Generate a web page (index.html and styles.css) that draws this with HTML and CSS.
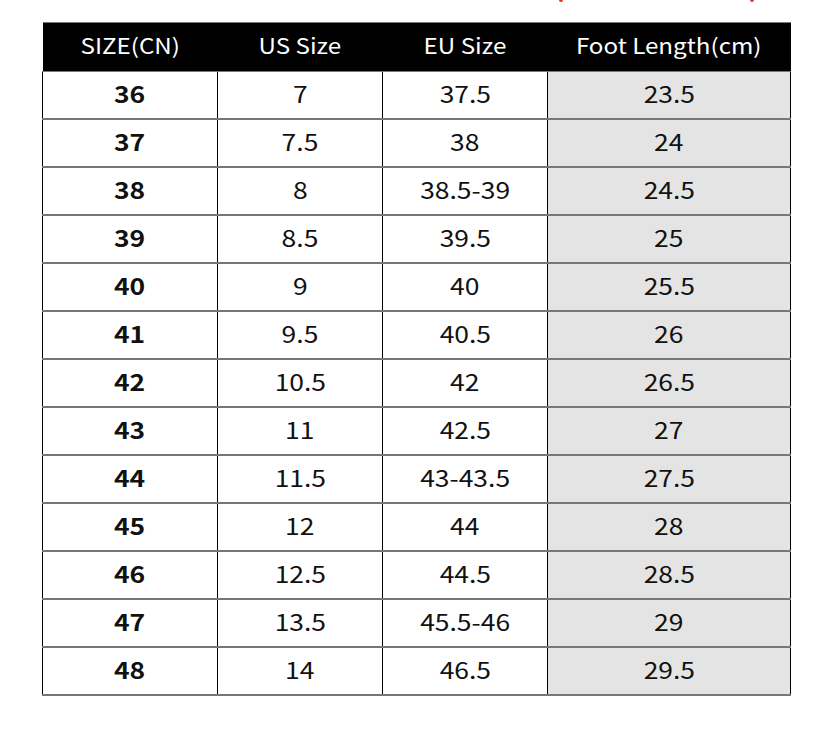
FILE: index.html
```html
<!DOCTYPE html>
<html>
<head>
<meta charset="utf-8">
<link rel="stylesheet" href="styles.css">
</head>
<body>
<div class="top">
  <span class="dot dot-a"></span>
  <span class="dot dot-b"></span>
</div>
<table class="chart">
  <colgroup>
    <col class="c1"><col class="c2"><col class="c3"><col class="c4">
  </colgroup>
  <thead>
    <tr><th><span>SIZE(CN)</span></th><th><span>US Size</span></th><th><span>EU Size</span></th><th><span>Foot Length(cm)</span></th></tr>
  </thead>
  <tbody>
    <tr><td class="cn"><span>36</span></td><td><span>7</span></td><td><span>37.5</span></td><td class="foot"><span>23.5</span></td></tr>
    <tr><td class="cn"><span>37</span></td><td><span>7.5</span></td><td><span>38</span></td><td class="foot"><span>24</span></td></tr>
    <tr><td class="cn"><span>38</span></td><td><span>8</span></td><td><span>38.5-39</span></td><td class="foot"><span>24.5</span></td></tr>
    <tr><td class="cn"><span>39</span></td><td><span>8.5</span></td><td><span>39.5</span></td><td class="foot"><span>25</span></td></tr>
    <tr><td class="cn"><span>40</span></td><td><span>9</span></td><td><span>40</span></td><td class="foot"><span>25.5</span></td></tr>
    <tr><td class="cn"><span>41</span></td><td><span>9.5</span></td><td><span>40.5</span></td><td class="foot"><span>26</span></td></tr>
    <tr><td class="cn"><span>42</span></td><td><span>10.5</span></td><td><span>42</span></td><td class="foot"><span>26.5</span></td></tr>
    <tr><td class="cn"><span>43</span></td><td><span>11</span></td><td><span>42.5</span></td><td class="foot"><span>27</span></td></tr>
    <tr><td class="cn"><span>44</span></td><td><span>11.5</span></td><td><span>43-43.5</span></td><td class="foot"><span>27.5</span></td></tr>
    <tr><td class="cn"><span>45</span></td><td><span>12</span></td><td><span>44</span></td><td class="foot"><span>28</span></td></tr>
    <tr><td class="cn"><span>46</span></td><td><span>12.5</span></td><td><span>44.5</span></td><td class="foot"><span>28.5</span></td></tr>
    <tr><td class="cn"><span>47</span></td><td><span>13.5</span></td><td><span>45.5-46</span></td><td class="foot"><span>29</span></td></tr>
    <tr><td class="cn"><span>48</span></td><td><span>14</span></td><td><span>46.5</span></td><td class="foot"><span>29.5</span></td></tr>
  </tbody>
</table>
</body>
</html>
```

FILE: styles.css
```css
html, body {
  margin: 0;
  padding: 0;
  background: #fff;
}
body {
  width: 833px;
  height: 738px;
  overflow: hidden;
  font-family: "Noto Sans CJK SC", "Noto Sans", sans-serif;
  color: #111;
}
.top {
  height: 22px;
  display: flex;
  align-items: flex-start;
}
.dot {
  display: block;
  width: 4px;
  height: 2px;
  background: #e0352b;
  border-radius: 0 0 2px 2px;
}
.dot-a { margin-left: 559px; }
.dot-b { margin-left: 187px; }
.chart {
  margin-left: 42px;
  width: 748px;
  border-collapse: collapse;
  table-layout: fixed;
}
.c1 { width: 175px; }
.c2 { width: 165px; }
.c3 { width: 165px; }
.c4 { width: 243px; }
.chart span {
  display: inline-block;
  transform: scaleX(1.15);
  line-height: 1;
}
.chart th {
  background: #000;
  color: #fff;
  font-weight: 400;
  font-size: 21px;
  height: 44px;
  padding: 0 0 4px;
  border-top: 1px solid #777;
  border-bottom: 1px solid #777;
  text-align: center;
  vertical-align: middle;
}
.chart td {
  height: 42px;
  padding: 0 0 4px;
  font-size: 23px;
  text-align: center;
  vertical-align: middle;
  border-left: 1px solid #000;
  border-right: 1px solid #000;
  border-bottom: 2px solid #777;
}
.chart td.cn {
  font-weight: 700;
}
.chart td.foot {
  background: #e4e4e4;
}
```
